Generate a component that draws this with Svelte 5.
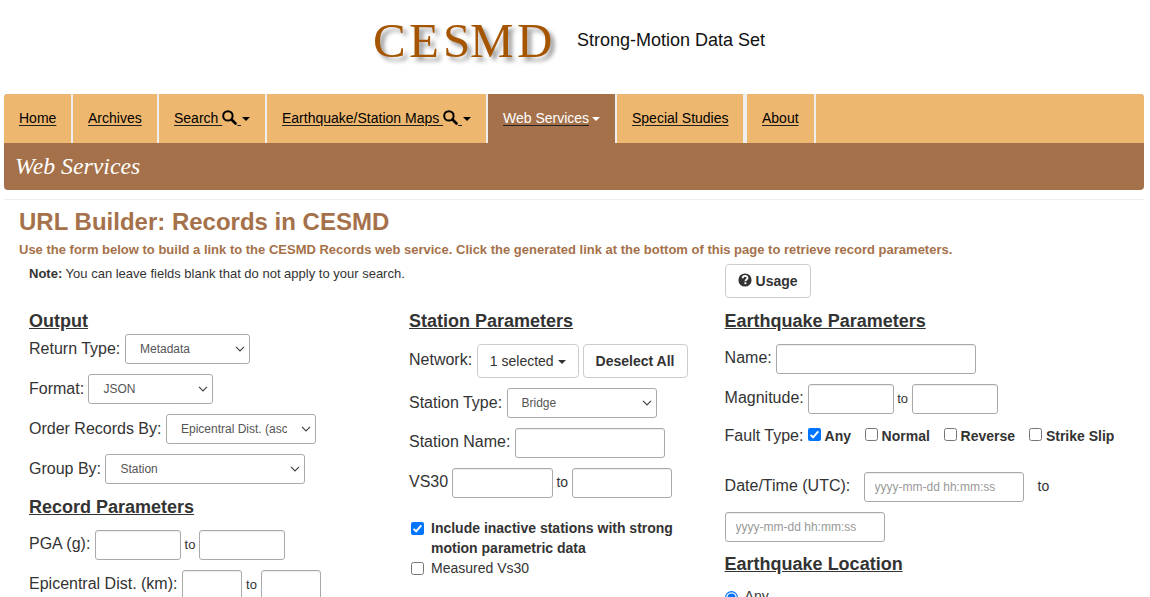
<script lang="ts">
  const nav = [
    { label: 'Home', width: 69 },
    { label: 'Archives', width: 86 },
    { label: 'Search ', width: 108, search: true, caret: true },
    { label: 'Earthquake/Station Maps ', width: 221, search: true, caret: true },
    { label: 'Web Services', width: 129, active: true, caret: true },
    { label: 'Special Studies', width: 128 },
    { label: 'About', width: 71, divided: true },
  ];
  const faults = [
    { label: 'Any', checked: true, width: 57 },
    { label: 'Normal', checked: false, width: 79 },
    { label: 'Reverse', checked: false, width: 85.3 },
    { label: 'Strike Slip', checked: false, width: 90 },
  ];
</script>

{#snippet picker(value: string, width: number)}
  <div class="control select" style:width="{width}px">
    <span>{value}</span>
    <svg width="10" height="6" viewBox="0 0 10 6"><path d="M1 .8 5 4.8 9 .8" fill="none" stroke="#444" stroke-width="1.2" /></svg>
  </div>
{/snippet}

{#snippet field(width: number, hint = '')}
  <input class="control" style:width="{width}px" placeholder={hint} />
{/snippet}

{#snippet box(checked: boolean)}
  <svg class="box" width="13" height="13" viewBox="0 0 13 13">
    {#if checked}
      <rect width="13" height="13" rx="2" fill="#0075ff" />
      <path d="M2.6 6.9 5.1 9.4 10.3 3.3" fill="none" stroke="#fff" stroke-width="2" />
    {:else}
      <rect x=".5" y=".5" width="12" height="12" rx="2" fill="#fff" stroke="#767676" />
    {/if}
  </svg>
{/snippet}

<header>
  <svg class="logo" width="190" height="62" viewBox="0 0 190 62">
    <text y="46.5" x="1 37 71 98 145">CESMD</text>
  </svg>
  <span class="tagline">Strong-Motion Data Set</span>
</header>

<div class="banner">
  <nav>
    {#each nav as item}
      <a href="#top" class:active={item.active} class:divided={item.divided} style:width="{item.width}px">
        <span class="label">{item.label}</span>
        {#if item.search}
          <svg class="glass" width="15" height="15" viewBox="0 0 15 15"><circle cx="5.9" cy="5.9" r="4.7" fill="none" stroke="currentColor" stroke-width="2" /><path d="m9.5 9.5 4 4" stroke="currentColor" stroke-width="2.6" stroke-linecap="round" /></svg><span class="label tail">&nbsp;</span>
        {/if}
        {#if item.caret}<i class="caret"></i>{/if}
      </a>
    {/each}
  </nav>
  <div class="section">Web Services</div>
</div>

<main>
  <h1>URL Builder: Records in CESMD</h1>
  <p class="lead">Use the form below to build a link to the CESMD Records web service. Click the generated link at the bottom of this page to retrieve record parameters.</p>
  <div class="form">
    <p class="note"><b>Note:</b> You can leave fields blank that do not apply to your search.</p>
    <button class="usage">
      <svg width="14" height="14" viewBox="0 0 14 14"><circle cx="7" cy="7" r="6.6" fill="#333" /><path d="M4.7 5.2c0-3 4.8-2.9 4.8-.2 0 1.6-2.1 1.5-2.1 3.3" fill="none" stroke="#fff" stroke-width="1.8" /><path d="M6.4 9.3h2v1.8h-2z" fill="#fff" /></svg>
      Usage
    </button>

    <section>
      <h2>Output</h2>
      <div class="row pick"><label style:width="96px">Return Type:</label>{@render picker('Metadata', 125)}</div>
      <div class="row pick"><label style:width="59.4px">Format:</label>{@render picker('JSON', 125)}</div>
      <div class="row pick"><label style:width="137px">Order Records By:</label>{@render picker('Epicentral Dist. (asc', 150)}</div>
      <div class="row pick"><label style:width="76.4px">Group By:</label>{@render picker('Station', 200)}</div>
      <h2 class="record">Record Parameters</h2>
      <div class="row"><label style:width="66px">PGA (g):</label>{@render field(86)}<span class="to">to</span>{@render field(86)}</div>
      <div class="row"><label style:width="153px">Epicentral Dist. (km):</label>{@render field(60)}<span class="to wide">to</span>{@render field(60)}</div>
    </section>

    <section>
      <h2 class="spaced">Station Parameters</h2>
      <div class="row network">
        <label style:width="67.5px">Network:</label>
        <button style:width="102.5px" class="plain">1 selected<i class="caret"></i></button>
        <button style:width="105px" class="deselect">Deselect All</button>
      </div>
      <div class="row pick"><label style:width="97.5px">Station Type:</label>{@render picker('Bridge', 150.5)}</div>
      <div class="row"><label style:width="106px">Station Name:</label>{@render field(150.4)}</div>
      <div class="row"><label style:width="43.4px">VS30</label>{@render field(100.4)}<span class="to vs">to</span>{@render field(100.4)}</div>
      <div class="check first">{@render box(true)}<b>Include inactive stations with strong motion parametric data</b></div>
      <div class="check">{@render box(false)}<span>Measured Vs30</span></div>
    </section>

    <section>
      <h2 class="spaced">Earthquake Parameters</h2>
      <div class="row"><label style:width="51px">Name:</label>{@render field(200)}</div>
      <div class="row"><label style:width="83px">Magnitude:</label>{@render field(86)}<span class="to">to</span>{@render field(86)}</div>
      <div class="faults">
        <label style:width="83px">Fault Type:</label>
        {#each faults as fault}
          <span class="fault" style:width="{fault.width}px">{@render box(fault.checked)}<b>{fault.label}</b></span>
        {/each}
      </div>
      <div class="row"><label style:width="139px">Date/Time (UTC):</label>{@render field(160, 'yyyy-mm-dd hh:mm:ss')}<span class="until">to</span></div>
      <div class="row">{@render field(160, 'yyyy-mm-dd hh:mm:ss')}</div>
      <h2 class="location">Earthquake Location</h2>
      <div class="radio"><svg width="13" height="13" viewBox="0 0 13 13"><circle cx="6.5" cy="6.5" r="5.9" fill="#fff" stroke="#0075ff" stroke-width="1.2" /><circle cx="6.5" cy="6.5" r="4" fill="#0075ff" /></svg><span>Any</span></div>
    </section>
  </div>
</main>

<style>
  :global(body) { background: #fff; overflow: hidden; }
  :global(#app) { height: 597px; overflow: hidden; font: 14px/20px "Liberation Sans", Arial, sans-serif; color: #333; }
  * { box-sizing: border-box; }
  header { display: flex; height: 94px; padding: 10px 0 0 372px; }
  .logo { flex: none; }
  .logo text { font: 49px "Liberation Serif", serif; fill: #a55500; filter: drop-shadow(4px 4px 2px rgba(0, 0, 0, .4)); }
  .tagline { margin: 20px 0 0 15px; font-size: 18px; color: #111; white-space: nowrap; }
  .banner { width: 1140px; height: 96px; margin-left: 4px; background: #a5714a; border-radius: 4px; overflow: hidden; }
  nav { display: flex; height: 49px; background: #eeb76f; }
  nav a { display: flex; align-items: center; height: 49px; padding: 0 0 1px 15px; border-right: 2px solid #eee; color: #000; text-decoration: none; white-space: pre; }
  nav a.divided { border-left: 2px solid #eee; }
  nav a.active { background: #a5714a; color: #fff; }
  .label { text-decoration: underline; text-decoration-color: #222; text-underline-offset: 2px; }
  .glass { flex: none; margin: -2px 0 0 0; }
  .tail { width: 4px; overflow: hidden; }
  nav .caret { margin-left: 1px; }
  nav .active .caret { margin-left: 2.5px; }
  .caret { flex: none; margin: 2px 0 0 2px; border: 4px solid transparent; border-top-color: currentColor; border-bottom: 0; }
  .section { height: 47px; padding-left: 11px; font: italic 23.8px/47px "Liberation Serif", serif; color: #fff; }
  main { margin: 9px 6px 0 4px; padding: 0 15px; border-top: 1px solid #eee; }
  h1 { height: 42px; margin: 0; font-size: 24px; line-height: 43px; color: #a5714a; white-space: nowrap; }
  .lead { height: 22px; margin: 0; font-size: 13px; font-weight: bold; line-height: 15px; color: #a5714a; white-space: nowrap; }
  .form { display: grid; grid-template-columns: 380px 315.6px 1fr; grid-template-rows: 44px auto; padding-left: 10px; }
  .note { grid-column: 1 / 3; margin: 0; font-size: 13px; }
  button { height: 34px; padding: 0; border: 1px solid #ccc; border-radius: 4px; background: #fff; color: #333; font: bold 14px/20px "Liberation Sans", Arial, sans-serif; display: flex; align-items: center; justify-content: center; }
  .usage { width: 86px; gap: 4px; }
  .usage svg { margin-top: -3px; }
  .plain { font-weight: normal; gap: 2px; }
  .deselect { margin-left: 3.5px; }
  h2 { height: 26px; margin: 0; font-size: 18px; line-height: 26px; text-decoration: underline; white-space: nowrap; }
  h2.spaced { margin-bottom: 10px; }
  h2.record { height: 36px; line-height: 26px; }
  h2.location { height: 34px; line-height: 25px; }
  .row { display: flex; align-items: center; height: 30px; margin-bottom: 10px; }
  .network { height: 34px; }
  label { flex: none; font-size: 16px; padding-bottom: 2px; white-space: nowrap; }
  .pick label { padding-bottom: 1px; }
  .faults label { padding-bottom: 1px; }
  .network label { padding-bottom: 3px; }
  .control { flex: none; height: 30px; margin: 0; padding: 0 10px; border: 1px solid #aaa; border-radius: 3px; background: #fff; font: 12px "Liberation Sans", Arial, sans-serif; color: #555; box-shadow: inset 0 1px 1px rgba(0, 0, 0, .07); }
  .control::placeholder { color: #999; opacity: 1; }
  .select { display: flex; align-items: center; justify-content: space-between; padding: 0 4px 0 14px; box-shadow: none; }
  .select span { overflow: hidden; width: calc(100% - 24px); white-space: nowrap; }
  .to { flex: none; width: 18px; text-align: center; padding-bottom: 1px; font-size: 13px; }
  .to.wide { width: 19px; }
  .to.vs { width: 19px; padding-bottom: 2px; font-size: 14px; }
  .check { display: flex; width: 285px; margin-left: 2px; }
  .check.first { margin-top: 20px; margin-bottom: 0; }
  .check .box { flex: none; margin: 4px 7px 0 0; }
  .faults { display: flex; align-items: center; height: 24px; margin-bottom: 24px; }
  .fault { flex: none; display: flex; white-space: nowrap; }
  .fault .box { margin: 2px 4px 0 0; }
  .until { margin-left: 14px; padding-bottom: 2px; }
  .radio { display: flex; gap: 7px; }
  .radio svg { margin-top: 5px; }
</style>
